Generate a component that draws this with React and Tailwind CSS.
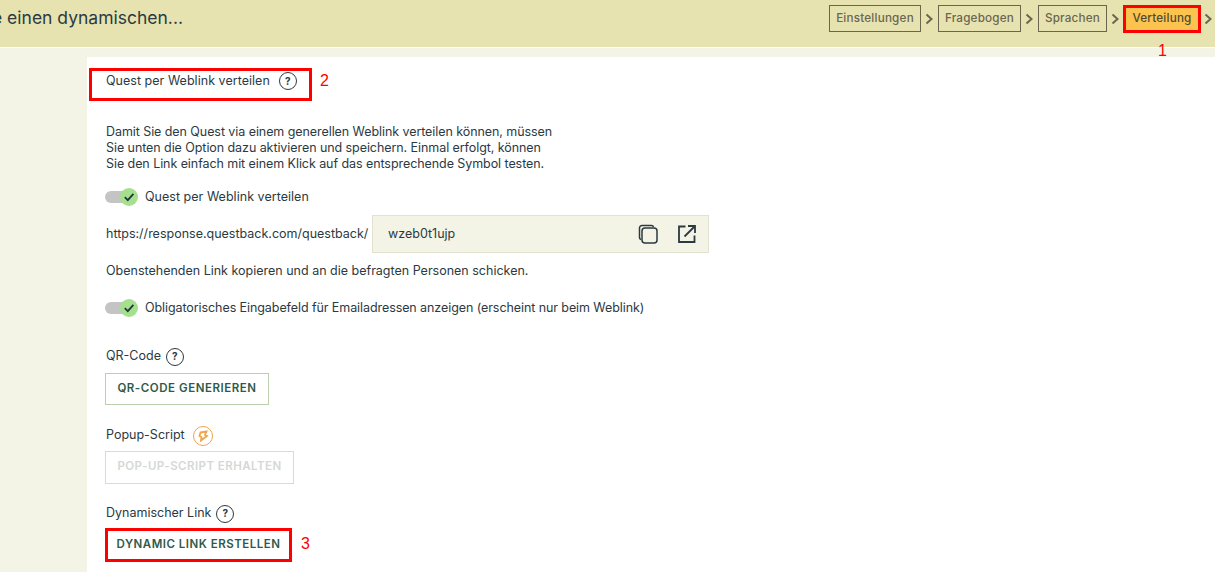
import React from 'react';

const font = { fontFamily: 'Inter, "Noto Sans", sans-serif' };
const redFont = { fontFamily: '"Liberation Sans", sans-serif' };

function HelpIcon({ className = '' }) {
    return (
        <span className={`inline-flex items-center justify-center w-[18px] h-[18px] rounded-full border-[1.5px] border-[#2b3a42] text-[10px] font-bold text-[#2b3a42] ${className}`}>
            ?
        </span>
    );
}

function Toggle() {
    return (
        <span className="relative inline-block w-[33px] h-[18px] shrink-0">
            <span className="absolute left-0 top-[3px] w-[28px] h-[12px] rounded-full bg-[#c4c4c4]" />
            <span className="absolute right-0 top-0 w-[18px] h-[18px] rounded-full bg-[#a5e08f] flex items-center justify-center">
                <svg width="12" height="12" viewBox="0 0 12 12" fill="none" stroke="#24363a" strokeWidth="1.8">
                    <path d="M1.8 6.2 L4.8 9.2 L10.4 2.8" />
                </svg>
            </span>
        </span>
    );
}

function Chevron() {
    return (
        <svg width="9" height="12" viewBox="0 0 9 12" fill="none" stroke="#6b6650" strokeWidth="2" className="mx-[4px]">
            <path d="M1.5 1.5 L6.5 6 L1.5 10.5" />
        </svg>
    );
}

function Step({ label, className }) {
    return (
        <div className={`h-[27px] flex items-center justify-center border border-[#6b6650] text-[11.7px] font-medium text-[#6b6650] tracking-[0.2px] ${className}`}>
            {label}
        </div>
    );
}

export default function App() {
    return (
        <div className="w-[1215px] h-[572px] overflow-hidden bg-[#f4f4e6] text-[#2b3a42] text-[12.5px]" style={font}>
            {/* Kopfzeile */}
            <div className="h-[47px] bg-[#e6e3b0] border-b border-white box-content flex items-center justify-between">
                <div className="text-[17.5px] text-[#2b3a42] -ml-[8px] -mt-[10px] whitespace-nowrap">e einen dynamischen...</div>
                <div className="flex items-center -mr-[2px] -mt-[10px]">
                    <Step label="Einstellungen" className="w-[92px]" />
                    <Chevron />
                    <Step label="Fragebogen" className="w-[83px]" />
                    <Chevron />
                    <Step label="Sprachen" className="w-[69px]" />
                    <Chevron />
                    <div className="relative h-[22px] w-[72px] ml-[2px] flex items-center justify-center bg-[#fdc34f] outline-[3px] outline-[#fe0000] text-[11.7px] font-medium text-[#4f4a30] tracking-[0.2px]">
                        Verteilung
                        <span className="absolute left-[32px] top-[31px] text-[16px] text-[#fe0000]" style={redFont}>1</span>
                    </div>
                    <span className="ml-[2px]">
                        <Chevron />
                    </span>
                </div>
            </div>

            <div className="flex">
                <div className="w-[87px] shrink-0" />
                <div className="flex-1 mt-[9px] bg-white h-[520px] pl-[19px] pt-[12px]">
                    <div className="relative flex items-center h-[24px]">
                        <span className="tracking-[0.03px]">Quest per Weblink verteilen</span>
                        <HelpIcon className="ml-[9px]" />
                        <span className="absolute left-[-17px] top-[-1px] w-[223px] h-[33px] border-[3px] border-[#fe0000]" />
                        <span className="absolute left-[214px] top-0 text-[16px] text-[#fe0000]" style={redFont}>2</span>
                    </div>

                    <p className="mt-[31px] leading-[16px] w-[470px] tracking-[-0.07px]">
                        Damit Sie den Quest via einem generellen Weblink verteilen können, müssen<br />
                        Sie unten die Option dazu aktivieren und speichern. Einmal erfolgt, können<br />
                        Sie den Link einfach mit einem Klick auf das entsprechende Symbol testen.
                    </p>

                    <div className="flex items-center gap-[7px] mt-[16px] -ml-[1px]">
                        <Toggle />
                        <span className="tracking-[0.03px]">Quest per Weblink verteilen</span>
                    </div>

                    <div className="flex items-center mt-[8px]">
                        <span className="w-[266px] whitespace-nowrap pt-[1px]">https://response.questback.com/questback/</span>
                        <div className="w-[337px] h-[38px] bg-[#f4f4e6] border border-[#e2e2d0] flex items-center pl-[15px] pr-[12px]">
                            <span className="flex-1 pt-[1px]">wzeb0t1ujp</span>
                            <svg width="20" height="20" viewBox="0 0 20 20" fill="none" className="mr-[20px]">
                                <path d="M3 15.5 A2 2 0 0 1 1.5 13.5 V4 A2.5 2.5 0 0 1 4 1.5 H13.5 A2 2 0 0 1 15.5 3" stroke="#2b3a42" strokeWidth="1.5" />
                                <rect x="4" y="4" width="15" height="15" rx="3" fill="#f4f4e6" stroke="#2b3a42" strokeWidth="1.5" />
                            </svg>
                            <svg width="18" height="18" viewBox="0 0 18 18" fill="none" stroke="#2b3a42" strokeWidth="1.8">
                                <path d="M7.5 1.5 H1 V17 H16.5 V10.5" />
                                <path d="M6.5 11.5 L16 2" />
                                <path d="M10 1 H17 V8" />
                            </svg>
                        </div>
                    </div>

                    <p className="mt-[10px] leading-[16px]">Obenstehenden Link kopieren und an die befragten Personen schicken.</p>

                    <div className="flex items-center gap-[7px] mt-[20px] -ml-[1px]">
                        <Toggle />
                        <span className="tracking-[-0.08px]">Obligatorisches Eingabefeld für Emailadressen anzeigen (erscheint nur beim Weblink)</span>
                    </div>

                    <div className="flex items-center mt-[29px] h-[20px]">
                        <span>QR-Code</span>
                        <HelpIcon className="ml-[5px]" />
                    </div>
                    <button className="block mt-[6px] -ml-[1px] w-[164px] h-[32px] border border-[#bdd0ad] text-[11.5px] font-semibold tracking-[0.55px] text-[#2f5a4a]">
                        QR-CODE GENERIEREN
                    </button>

                    <div className="flex items-center mt-[21px] h-[20px]">
                        <span>Popup-Script</span>
                        <span className="ml-[8px] w-[20px] h-[20px] rounded-full border-[1.5px] border-[#f0a54a] flex items-center justify-center">
                            <svg width="12" height="12" viewBox="0 0 12 12" fill="none" stroke="#f0a54a" strokeWidth="1.8">
                                <path d="M3.5 2.5 L9.5 1.5 L8 5 L10 6 L4 10.5 L4.5 7 L2.5 6 Z" />
                            </svg>
                        </span>
                    </div>
                    <button className="block mt-[5px] -ml-[1px] w-[189px] h-[33px] border border-[#d9d9d9] text-[11.5px] font-semibold tracking-[0.45px] text-[#d5d8d6]">
                        POP-UP-SCRIPT ERHALTEN
                    </button>

                    <div className="flex items-center mt-[20px] h-[20px]">
                        <span>Dynamischer Link</span>
                        <HelpIcon className="ml-[5px]" />
                    </div>
                    <div className="relative mt-[4px] -ml-[1px] w-[187px]">
                        <button className="block w-[187px] h-[34px] border-[3px] border-[#fe0000] text-[11.5px] font-semibold tracking-[0.5px] text-[#2f5a4a]">
                            DYNAMIC LINK ERSTELLEN
                        </button>
                        <span className="absolute left-[196px] top-[4px] text-[16px] text-[#fe0000]" style={redFont}>3</span>
                    </div>
                </div>
            </div>
        </div>
    );
}
